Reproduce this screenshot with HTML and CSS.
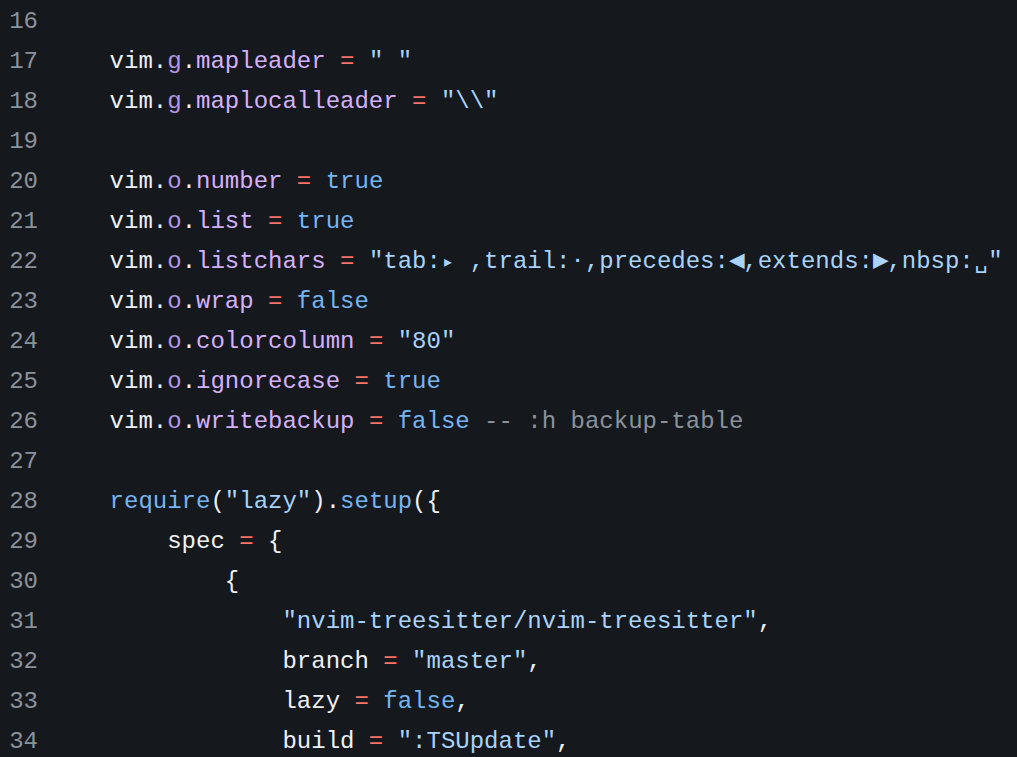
FILE: index.html
```html
<!DOCTYPE html>
<html>
<head>
<meta charset="utf-8">
<link rel="stylesheet" href="styles.css">
</head>
<body>
<div class="code">
  <div class="row"><span class="ln">16</span><span class="src"></span></div>
  <div class="row"><span class="ln">17</span><span class="src">    vim.<span class="ns">g</span>.<span class="pr">mapleader</span> <span class="op">=</span> <span class="st">" "</span></span></div>
  <div class="row"><span class="ln">18</span><span class="src">    vim.<span class="ns">g</span>.<span class="pr">maplocalleader</span> <span class="op">=</span> <span class="st">"\\"</span></span></div>
  <div class="row"><span class="ln">19</span><span class="src"></span></div>
  <div class="row"><span class="ln">20</span><span class="src">    vim.<span class="ns">o</span>.<span class="pr">number</span> <span class="op">=</span> <span class="kw">true</span></span></div>
  <div class="row"><span class="ln">21</span><span class="src">    vim.<span class="ns">o</span>.<span class="pr">list</span> <span class="op">=</span> <span class="kw">true</span></span></div>
  <div class="row"><span class="ln">22</span><span class="src">    vim.<span class="ns">o</span>.<span class="pr">listchars</span> <span class="op">=</span> <span class="st">"tab:<span class="g g-small">▸</span> ,trail:<span class="g">·</span>,precedes:<span class="g g-big">◀</span>,extends:<span class="g g-big">▶</span>,nbsp:<span class="g">␣</span>"</span></span></div>
  <div class="row"><span class="ln">23</span><span class="src">    vim.<span class="ns">o</span>.<span class="pr">wrap</span> <span class="op">=</span> <span class="kw">false</span></span></div>
  <div class="row"><span class="ln">24</span><span class="src">    vim.<span class="ns">o</span>.<span class="pr">colorcolumn</span> <span class="op">=</span> <span class="st">"80"</span></span></div>
  <div class="row"><span class="ln">25</span><span class="src">    vim.<span class="ns">o</span>.<span class="pr">ignorecase</span> <span class="op">=</span> <span class="kw">true</span></span></div>
  <div class="row"><span class="ln">26</span><span class="src">    vim.<span class="ns">o</span>.<span class="pr">writebackup</span> <span class="op">=</span> <span class="kw">false</span> <span class="cm">-- :h backup-table</span></span></div>
  <div class="row"><span class="ln">27</span><span class="src"></span></div>
  <div class="row"><span class="ln">28</span><span class="src">    <span class="kw">require</span>(<span class="st">"lazy"</span>).<span class="kw">setup</span>({</span></div>
  <div class="row"><span class="ln">29</span><span class="src">        spec <span class="op">=</span> {</span></div>
  <div class="row"><span class="ln">30</span><span class="src">            {</span></div>
  <div class="row"><span class="ln">31</span><span class="src">                <span class="st">"nvim-treesitter/nvim-treesitter"</span>,</span></div>
  <div class="row"><span class="ln">32</span><span class="src">                branch <span class="op">=</span> <span class="st">"master"</span>,</span></div>
  <div class="row"><span class="ln">33</span><span class="src">                lazy <span class="op">=</span> <span class="kw">false</span>,</span></div>
  <div class="row"><span class="ln">34</span><span class="src">                build <span class="op">=</span> <span class="st">":TSUpdate"</span>,</span></div>
</div>
</body>
</html>
```

FILE: styles.css
```css
html, body {
  margin: 0;
  padding: 0;
  background: #15181d;
  overflow: hidden;
}
.code {
  font-family: "Liberation Mono", "DejaVu Sans Mono", monospace;
  font-size: 24px;
  line-height: 40px;
  color: #eef1f4;
  padding-top: 2px;
}
.row {
  display: flex;
  height: 40px;
  white-space: pre;
}
.ln {
  flex: 0 0 38px;
  text-align: right;
  padding-right: 14px;
  color: #8a929b;
}
.src { white-space: pre; }
.ns { color: #b395e6; }
.pr { color: #d4b1fb; }
.op { color: #f97468; }
.st { color: #a8d3fb; }
.kw { color: #74b6f3; }
.cm { color: #8a929b; }
.g {
  display: inline-block;
  width: 14.4px;
  text-align: center;
  font-family: "DejaVu Sans Mono", monospace;
  font-size: 22px;
  line-height: 1;
}
.g-small { font-size: 20px; }
.g-big { font-size: 26px; }
```
